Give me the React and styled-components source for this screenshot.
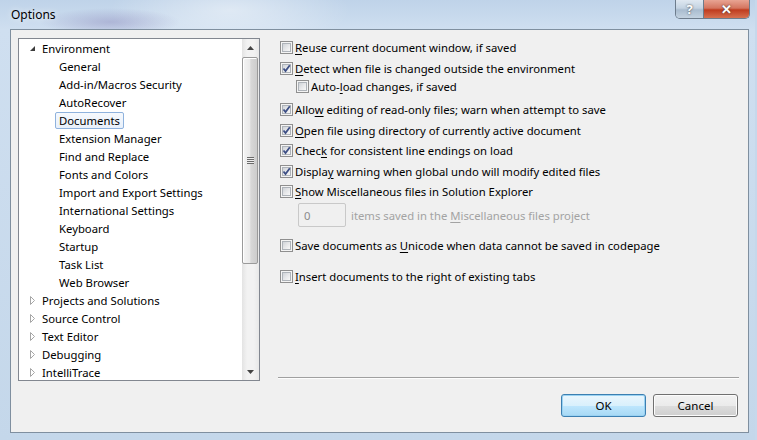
import styled, { createGlobalStyle } from 'styled-components';

const GlobalStyle = createGlobalStyle`
  html, body {
    margin: 0;
    padding: 0;
    width: 757px;
    height: 440px;
    overflow: hidden;
    background: #c6d8eb;
  }
  * { box-sizing: border-box; }
`;

const treeItems = [
    { label: 'Environment', level: 0, state: 'open' },
    { label: 'General', level: 1 },
    { label: 'Add-in/Macros Security', level: 1 },
    { label: 'AutoRecover', level: 1 },
    { label: 'Documents', level: 1, selected: true },
    { label: 'Extension Manager', level: 1 },
    { label: 'Find and Replace', level: 1 },
    { label: 'Fonts and Colors', level: 1 },
    { label: 'Import and Export Settings', level: 1 },
    { label: 'International Settings', level: 1 },
    { label: 'Keyboard', level: 1 },
    { label: 'Startup', level: 1 },
    { label: 'Task List', level: 1 },
    { label: 'Web Browser', level: 1 },
    { label: 'Projects and Solutions', level: 0, state: 'closed' },
    { label: 'Source Control', level: 0, state: 'closed' },
    { label: 'Text Editor', level: 0, state: 'closed' },
    { label: 'Debugging', level: 0, state: 'closed' },
    { label: 'IntelliTrace', level: 0, state: 'closed' },
];

// text split around the access-key letter: [before, key, after]
const options = [
    { parts: ['', 'R', 'euse current document window, if saved'], checked: false, gap: 0 },
    { parts: ['', 'D', 'etect when file is changed outside the environment'], checked: true, gap: 1 },
    { parts: ['Auto-', 'l', 'oad changes, if saved'], checked: false, gap: -2, indent: true },
    { parts: ['Allo', 'w', ' editing of read-only files; warn when attempt to save'], checked: true, gap: 3 },
    { parts: ['', 'O', 'pen file using directory of currently active document'], checked: true, gap: 1 },
    { parts: ['Chec', 'k', ' for consistent line endings on load'], checked: true, gap: 0 },
    { parts: ['Displa', 'y', ' warning when global undo will modify edited files'], checked: true, gap: 1 },
    { parts: ['', 'S', 'how Miscellaneous files in Solution Explorer'], checked: false, gap: 0 },
];

const lateOptions = [
    { parts: ['Save documents as ', 'U', 'nicode when data cannot be saved in codepage'], checked: false, gap: 8 },
    { parts: ['', 'I', 'nsert documents to the right of existing tabs'], checked: false, gap: 11 },
];

const Window = styled.div`
    width: 757px;
    height: 440px;
    display: flex;
    flex-direction: column;
    padding: 0 6px 7px 10px;
    border-left: 2px solid #4b5a68;
    background:
        radial-gradient(ellipse 70px 14px at 110px 22px, rgba(120, 110, 170, 0.35), transparent),
        radial-gradient(ellipse 120px 40px at 230px 10px, rgba(255, 255, 255, 0.45), transparent),
        linear-gradient(180deg, #bfd3e9 0%, #cfdff0 30px, #c4d7ea 100%);
    font-family: "Noto Sans", "Open Sans", sans-serif;
    font-size: 11.3px;
    color: #000;
    margin-left: -2px;
`;

const TitleBar = styled.div`
    height: 29px;
    display: flex;
    justify-content: space-between;
    align-items: flex-start;
    margin-right: -1px;
`;

const Caption = styled.span`
    padding: 6px 0 0 1px;
    font-size: 12px;
    color: #000;
    text-shadow: 0 0 6px rgba(255, 255, 255, 0.9);
`;

const CaptionButtons = styled.div`
    display: flex;
    height: 19px;
    border: 1px solid #6d7c8c;
    border-top: none;
    border-radius: 0 0 5px 5px;
    overflow: hidden;
`;

const CaptionButton = styled.div`
    width: ${({ $wide }) => ($wide ? '46px' : '27px')};
    display: flex;
    align-items: center;
    justify-content: center;
    color: #fff;
    font-weight: bold;
    font-size: 13px;
    background: ${({ $close }) =>
        $close
            ? 'linear-gradient(180deg, #e8a493 0%, #d4755f 45%, #bf3c1f 55%, #d7704f 100%)'
            : 'linear-gradient(180deg, #dfe8f1 0%, #c4d3e2 45%, #a9bccf 55%, #c3d2e0 100%)'};
    border-left: ${({ $close }) => ($close ? '1px solid #6d7c8c' : 'none')};
    text-shadow: 0 0 2px #333;
`;

const Client = styled.div`
    flex: 1;
    display: flex;
    gap: 18px;
    padding: 7px 10px 15px 7px;
    background: #f0f0f0;
    border: 1px solid #7f8f9f;
`;

const Tree = styled.div`
    width: 242px;
    height: 343px;
    margin-top: 1px;
    display: flex;
    background: #fff;
    border: 1px solid #828790;
`;

const TreeList = styled.div`
    flex: 1;
    overflow: hidden;
`;

const TreeRow = styled.div`
    height: 18px;
    display: flex;
    align-items: center;
    padding-left: ${({ $level }) => 3 + $level * 17}px;
    white-space: nowrap;
`;

const Toggle = styled.span`
    width: 16px;
    height: 16px;
    display: flex;
    align-items: center;
    flex-shrink: 0;
`;

const TreeLabel = styled.span`
    height: 17px;
    display: flex;
    align-items: center;
    padding: 0 3px;
    border: 1px solid ${({ $selected }) => ($selected ? '#8fb2dd' : 'transparent')};
    border-radius: 2px;
    background: ${({ $selected }) =>
        $selected ? 'linear-gradient(180deg, #f6f9fd 0%, #e8f0fa 100%)' : 'transparent'};
`;

const ScrollBar = styled.div`
    width: 17px;
    display: flex;
    flex-direction: column;
    background: linear-gradient(90deg, #e3e3e3 0%, #f2f2f2 30%, #f2f2f2 70%, #e8e8e8 100%);
`;

const ScrollArrow = styled.div`
    height: 17px;
    display: flex;
    align-items: center;
    justify-content: center;
    flex-shrink: 0;
`;

const ScrollTrack = styled.div`
    flex: 1;
    display: flex;
    flex-direction: column;
    padding: 1px 1px 0 0;
`;

const Thumb = styled.div`
    height: 207px;
    border: 1px solid #9a9a9a;
    border-radius: 2px;
    background: linear-gradient(90deg, #f4f4f4 0%, #e9e9e9 50%, #d8d8d8 55%, #cccccc 100%);
    box-shadow: inset 1px 1px 0 #fff;
    display: flex;
    align-items: center;
    justify-content: center;
`;

const Grip = styled.div`
    width: 7px;
    height: 7px;
    background: repeating-linear-gradient(180deg, #6a6a6a 0 1px, #eeeeee 1px 2px);
`;

const RightPane = styled.div`
    flex: 1;
    display: flex;
    flex-direction: column;
`;

const OptionList = styled.div`
    flex: 1;
    display: flex;
    flex-direction: column;
`;

const OptionRow = styled.label`
    height: 20px;
    display: flex;
    align-items: center;
    gap: 2px;
    margin-top: ${({ $gap }) => $gap}px;
    padding-left: ${({ $indent }) => ($indent ? 18 : 2)}px;
    white-space: nowrap;
`;

const Box = styled.span`
    width: 13px;
    height: 13px;
    flex-shrink: 0;
    border: 1px solid #8f8f8f;
    background: #f4f4f4;
    padding: 1px;
    display: flex;
`;

const BoxInner = styled.span`
    flex: 1;
    border: 1px solid #aeb3b9;
    background: linear-gradient(135deg, #cfd3d8 0%, #e6e7e9 50%, #f8f8f8 100%);
    position: relative;
`;

const Key = styled.span`
    text-decoration: underline;
    text-underline-offset: 2px;
`;

const CountRow = styled.div`
    height: 24px;
    margin-top: 2px;
    display: flex;
    align-items: center;
    gap: 5px;
    padding-left: 20px;
    color: #a3a3a3;
    white-space: nowrap;
`;

const CountBox = styled.div`
    width: 48px;
    height: 24px;
    border: 1px solid #c9c9c9;
    border-radius: 2px;
    background: #f0f0f0;
    color: #8b8b8b;
    display: flex;
    align-items: center;
    padding-left: 5px;
`;

const Separator = styled.div`
    height: 2px;
    margin: 0 -1px 15px 0;
    border-top: 1px solid #a0a0a0;
    border-bottom: 1px solid #fdfdfd;
`;

const ButtonRow = styled.div`
    display: flex;
    justify-content: flex-end;
    gap: 7px;
`;

const Button = styled.button`
    width: 85px;
    height: 23px;
    font-family: inherit;
    font-size: 11.5px;
    color: #000;
    border-radius: 3px;
    border: 1px solid ${({ $default }) => ($default ? '#3c7fb1' : '#707070')};
    background: ${({ $default }) =>
        $default
            ? 'linear-gradient(180deg, #eaf6fd 0%, #d9f0fc 50%, #bee6fd 51%, #a7d9f5 100%)'
            : 'linear-gradient(180deg, #f2f2f2 0%, #ebebeb 50%, #dddddd 51%, #cfcfcf 100%)'};
    box-shadow: inset 0 0 0 1px ${({ $default }) => ($default ? '#9ad2f2' : '#fcfcfc')};
    padding: 0;
`;

const Arrow = ({ state }) => {
    if (state === 'open') {
        return (
            <svg width="16" height="16" viewBox="0 0 16 16">
                <path d="M13 6 L13 11 L8 11 Z" fill="#3c3c3c" />
            </svg>
        );
    }
    if (state === 'closed') {
        return (
            <svg width="16" height="16" viewBox="0 0 16 16">
                <path d="M8.5 4.5 L12.5 8.5 L8.5 12.5 Z" fill="#fff" stroke="#a6a6a6" />
            </svg>
        );
    }
    return null;
};

const CheckBox = ({ checked }) => (
    <Box>
        <BoxInner>
            {checked && (
                <svg width="9" height="9" viewBox="0 0 9 9" style={{ position: 'absolute', left: -1, top: -1 }}>
                    <path d="M1.5 4.5 L3.5 7 L7.8 1.2" fill="none" stroke="#3d4f85" strokeWidth="1.8" />
                </svg>
            )}
        </BoxInner>
    </Box>
);

const Option = ({ opt }) => (
    <OptionRow $gap={opt.gap} $indent={opt.indent}>
        <CheckBox checked={opt.checked} />
        <span>
            {opt.parts[0]}
            <Key>{opt.parts[1]}</Key>
            {opt.parts[2]}
        </span>
    </OptionRow>
);

const App = () => (
    <>
        <GlobalStyle />
        <Window>
            <TitleBar>
                <Caption>Options</Caption>
                <CaptionButtons>
                    <CaptionButton>?</CaptionButton>
                    <CaptionButton $close $wide>✕</CaptionButton>
                </CaptionButtons>
            </TitleBar>
            <Client>
                <Tree>
                    <TreeList>
                        {treeItems.map(item => (
                            <TreeRow key={item.label} $level={item.level}>
                                <Toggle>
                                    <Arrow state={item.state} />
                                </Toggle>
                                <TreeLabel $selected={item.selected}>{item.label}</TreeLabel>
                            </TreeRow>
                        ))}
                    </TreeList>
                    <ScrollBar>
                        <ScrollArrow>
                            <svg width="7" height="4" viewBox="0 0 7 4">
                                <path d="M0 4 L3.5 0 L7 4 Z" fill="#444" />
                            </svg>
                        </ScrollArrow>
                        <ScrollTrack>
                            <Thumb>
                                <Grip />
                            </Thumb>
                        </ScrollTrack>
                        <ScrollArrow>
                            <svg width="7" height="4" viewBox="0 0 7 4">
                                <path d="M0 0 L3.5 4 L7 0 Z" fill="#444" />
                            </svg>
                        </ScrollArrow>
                    </ScrollBar>
                </Tree>
                <RightPane>
                    <OptionList>
                        {options.map(opt => (
                            <Option key={opt.parts.join('')} opt={opt} />
                        ))}
                        <CountRow>
                            <CountBox>0</CountBox>
                            <span>
                                items saved in the <Key>M</Key>iscellaneous files project
                            </span>
                        </CountRow>
                        {lateOptions.map(opt => (
                            <Option key={opt.parts.join('')} opt={opt} />
                        ))}
                    </OptionList>
                    <Separator />
                    <ButtonRow>
                        <Button $default>OK</Button>
                        <Button>Cancel</Button>
                    </ButtonRow>
                </RightPane>
            </Client>
        </Window>
    </>
);

export default App;
